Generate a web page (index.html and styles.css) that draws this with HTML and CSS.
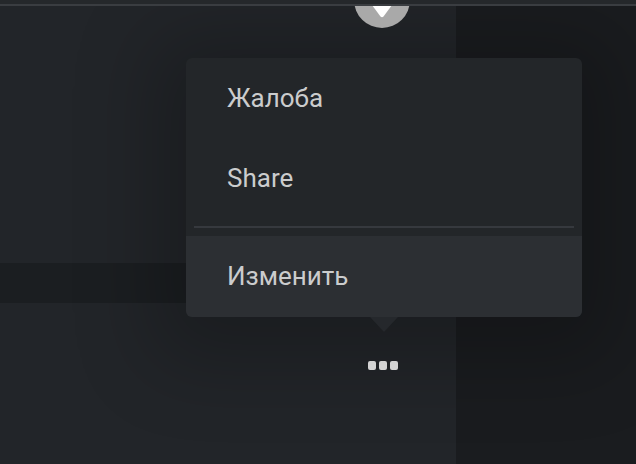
FILE: index.html
```html
<!DOCTYPE html>
<html>
<head lang="ru">
    <meta charset="UTF-8">
    <title>Меню</title>
    <link rel="stylesheet" href="styles.css">
</head>
<body>
<div class="topbar"></div>
<div class="main">
    <div class="panel">
        <div class="band"></div>
        <div class="more">
            <span class="dot"></span><span class="dot"></span><span class="dot"></span>
        </div>
    </div>
    <div class="side"></div>
</div>

<!-- кнопка сворачивания сверху -->
<div class="collapse">
    <svg width="56" height="56" viewBox="0 0 56 56">
        <circle cx="28" cy="28" r="28" fill="#a9a9a9"/>
        <path d="M15 29 L41 29 L29.5 44.5 Q28 46 26.5 44.5 Z" fill="#fff"/>
    </svg>
</div>

<!-- выпадающее меню -->
<div class="menu">
    <div class="item">Жалоба</div>
    <div class="item">Share</div>
    <div class="sep"></div>
    <div class="item active">Изменить</div>
    <div class="tip"></div>
</div>
</body>
</html>
```
FILE: styles.css
```css
*{
    margin: 0;
    padding: 0;
    box-sizing: border-box;
}
body{
    width: 636px;
    height: 464px;
    overflow: hidden;
    background-color: #1a1c1f;
    font-family: Roboto, "Noto Sans", sans-serif;
    position: relative;
}
.topbar{
    position: relative;
    z-index: 2;
    height: 6px;
    background-color: #25282b;
    border-bottom: 2px solid #3a3d41;
}
.main{
    display: flex;
    flex-flow: row nowrap;
    height: 458px;
}
.panel{
    width: 456px;
    background-color: #222529;
    padding-top: 257px;
}
.side{
    flex: 1;
    background-color: #1a1c1f;
}
.band{
    height: 40px;
    background-color: #1b1e21;
}
.more{
    display: flex;
    gap: 3px;
    margin-top: 58px;
    padding-left: 368px;
}
.dot{
    width: 8px;
    height: 9px;
    border-radius: 2px;
    background-color: #ececec;
}
.collapse{
    position: absolute;
    z-index: 1;
    left: 354px;
    top: -28px;
    width: 56px;
    height: 56px;
}
.collapse svg{
    display: block;
}
.menu{
    position: absolute;
    left: 186px;
    top: 58px;
    width: 396px;
    background-color: #232629;
    border-radius: 6px;
    box-shadow: 0 12px 80px 34px rgba(0,0,0,0.22);
}
.item{
    height: 80px;
    line-height: 80px;
    padding-left: 41px;
    font-size: 26px;
    color: #cbcccd;
}
.sep{
    height: 2px;
    margin: 8px 8px 8px 8px;
    background-color: #36393e;
}
.item.active{
    height: 81px;
    background-color: #2c2f33;
    border-radius: 0 0 6px 6px;
}
.tip{
    position: absolute;
    left: 184px;
    bottom: -15px;
    width: 0;
    height: 0;
    border-left: 14px solid transparent;
    border-right: 14px solid transparent;
    border-top: 15px solid #25282c;
}
```
